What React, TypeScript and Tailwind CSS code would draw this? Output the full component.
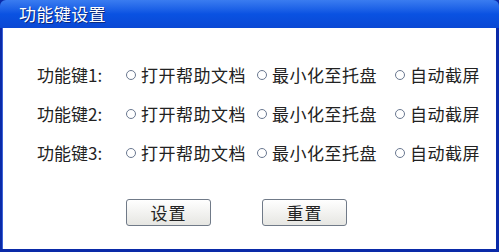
import React from "react";

const font = { fontFamily: '"Noto Sans CJK SC", "Noto Sans", sans-serif' };

function Radio({ label }: { label: string }) {
  return (
    <div className="flex items-center">
      <span className="w-[10px] h-[10px] rounded-full border border-[#6a7890] bg-white mr-[5px] shrink-0" />
      <span className="text-[17px] leading-[20px] text-[#222] tracking-[0.5px]">{label}</span>
    </div>
  );
}

function Row({ n }: { n: number }) {
  return (
    <div className="flex items-center h-[20px]">
      <div className="w-[89px] pl-[35px] box-content text-[17px] leading-[20px] text-[#222] whitespace-nowrap">
        功能键{n}:
      </div>
      <div className="w-[131px]">
        <Radio label="打开帮助文档" />
      </div>
      <div className="w-[138px]">
        <Radio label="最小化至托盘" />
      </div>
      <Radio label="自动截屏" />
    </div>
  );
}

function Btn({ label }: { label: string }) {
  return (
    <button className="w-[85px] h-[27px] rounded-[3px] border border-[#707a88] bg-gradient-to-b from-[#ffffff] to-[#e6e6e2] text-[17px] leading-[20px] text-[#222] flex items-center justify-center tracking-[1px]">
      {label}
    </button>
  );
}

export default function App() {
  return (
    <div style={font} className="w-[499px] h-[252px] flex flex-col bg-[#0a2aa8] overflow-hidden">
      <div className="h-[28px] rounded-tl-[6px] rounded-tr-[6px] bg-gradient-to-b from-[#3a7cf0] via-[#0a52e2] to-[#0a48d4] flex items-center pl-[19px]">
        <span className="text-white text-[17px] leading-[20px] tracking-[0.4px] [text-shadow:1px_1px_0_#0a2a80]">功能键设置</span>
      </div>
      <div className="flex-1 flex ml-[2px] mr-[3px] mb-[3px] bg-white">
        <div className="flex-1 flex flex-col pt-[37px] border-l border-[#3b62d8]">
          <div className="flex flex-col gap-[19px] -ml-[1px]">
            <Row n={1} />
            <Row n={2} />
            <Row n={3} />
          </div>
          <div className="flex mt-[36px] pl-[123px] gap-[51px]">
            <Btn label="设置" />
            <Btn label="重置" />
          </div>
        </div>
      </div>
    </div>
  );
}
